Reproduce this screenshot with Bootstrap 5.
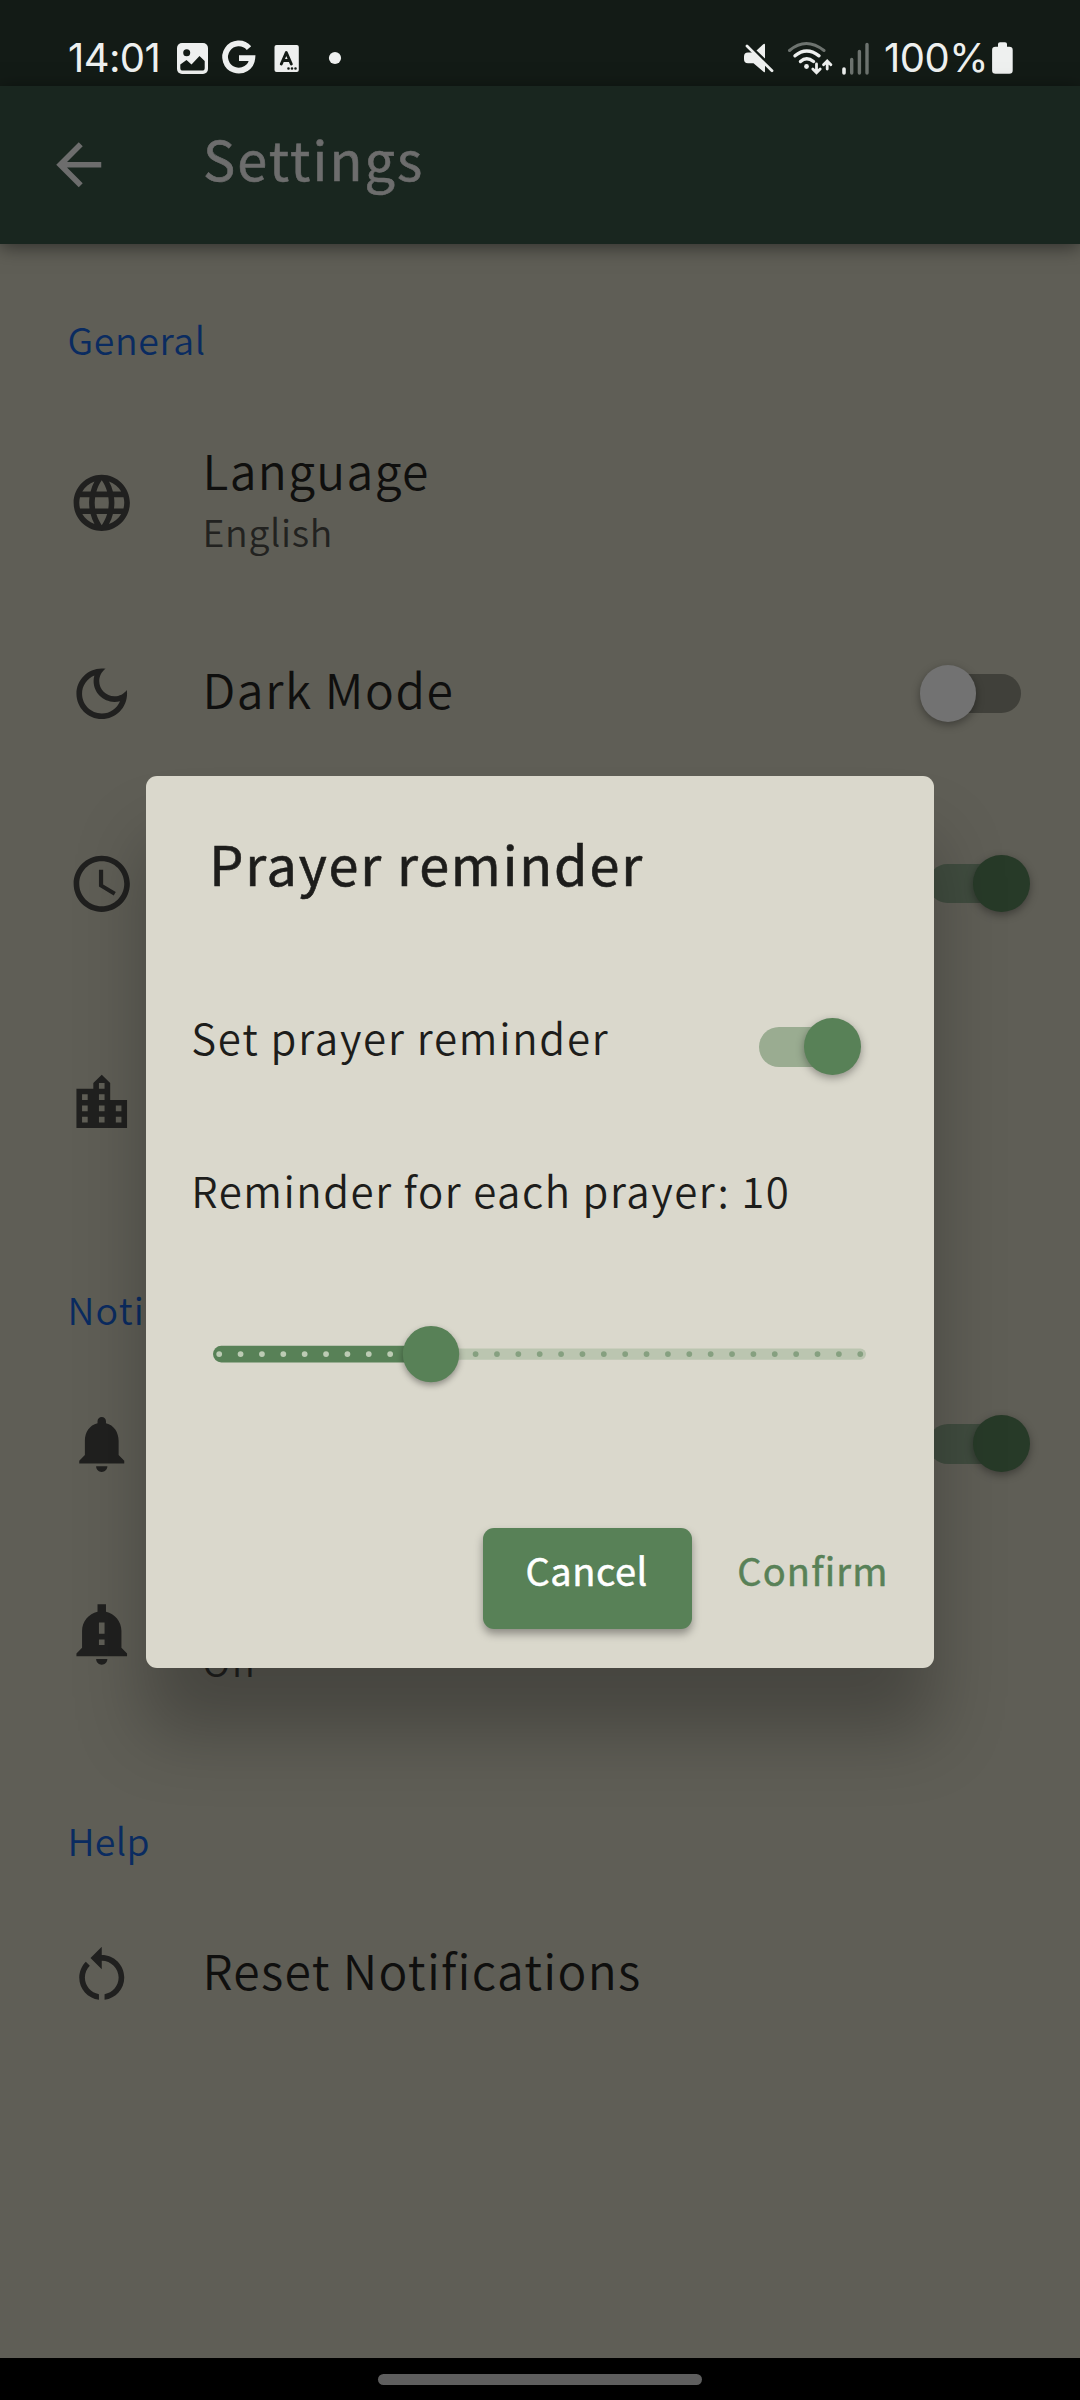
<!DOCTYPE html>
<html lang="en">
<head>
<meta charset="utf-8">
<meta name="viewport" content="width=device-width, initial-scale=1">
<title>Settings</title>
<link href="https://cdn.jsdelivr.net/npm/bootstrap@5.3.0/dist/css/bootstrap.min.css" rel="stylesheet">
<style>
  html, body { height: 2400px; overflow: hidden; }
  body { background: #5f5e56; font-family: "Noto Sans CJK SC", "Noto Sans", sans-serif; font-weight: 350; color: #0f0f0e; }
  .screen { width: 1080px; height: 2400px; overflow: hidden; }
  .statusbar { height: 86px; background: #131b16; color: #eef0ef; font: 400 40px/40px Inter, Roboto, sans-serif; padding: 0 66px 0 68px; }
  .status-group { padding-top: 30px; white-space: nowrap; }
  .clock-text { width: 92px; letter-spacing: -.6px; }
  .pct-text { width: 106px; letter-spacing: -.5px; }
  .appbar { height: 157.5px; background: #19261f; color: #6d6d6d; padding-left: 45px; box-shadow: 0 3px 18px rgba(0,0,0,.5); z-index: 1; }
  .appbar-title { font-size: 54px; line-height: 80px; font-weight: 400; margin-left: 90.5px; letter-spacing: 2.1px; padding-bottom: 14px; -webkit-text-stroke: .6px; }
  .glyph { width: 67.5px; height: 67.5px; flex: none; fill: #20201f; }
  .appbar .glyph { fill: #6d6d6d; }
  .sect { color: #0a2b60; font-size: 37.5px; line-height: 60px; padding-left: 67.5px; letter-spacing: .6px; }
  .setting { height: 190.2px; padding: 0 39px 0 67.5px; }
  .setting-tall { height: 249px; }
  .setting-text { margin-left: 67.5px; }
  .t1 { font-size: 48px; line-height: 62px; letter-spacing: 1.35px; }
  .t2 { font-size: 37.5px; line-height: 62px; color: #222220; letter-spacing: .65px; }
  .toggle { width: 121px; height: 67px; flex: none; position: relative; }
  .toggle::before { content: ""; position: absolute; left: 8px; top: 13.8px; width: 93px; height: 39.5px; border-radius: 20px; background: #40403a; }
  .toggle::after { content: ""; position: absolute; left: -.5px; top: 5.2px; width: 56.5px; height: 56.5px; border-radius: 50%; background: #727272; box-shadow: 0 3px 8px rgba(0,0,0,.35); }
  .toggle.on::before { background: #404c3f; }
  .toggle.on::after { left: 53px; background: #273a28; }
  .dlg .toggle.on::before { background: #9aac91; }
  .dlg .toggle.on::after { background: #588157; }
  .overlay { top: 86px; bottom: 42px; left: 0; right: 0; z-index: 2; }
  .dlg { width: 787.5px; height: 892.5px; border-radius: 11px; background: #dad8cc; color: #1d1d1b; box-shadow: 0 65px 70px rgba(0,0,0,.26); }
  .dlg-title { padding: 47px 0 0 63px; font-size: 54px; line-height: 80px; font-weight: 400; letter-spacing: 1.82px; -webkit-text-stroke: .6px; }
  .dlg-row { margin-top: 68px; height: 152px; padding: 0 61.5px 0 45px; font-size: 42px; }
  .dlg-rowtext { padding-bottom: 20px; letter-spacing: 1.76px; }
  .dlg-label { padding: 37px 0 0 45px; font-size: 42px; line-height: 60px; letter-spacing: 1.54px; }
  .range { margin: 104px 0 0 57px; width: 674px; height: 60px; overflow: visible; }
  .dlg-foot { padding: 0 42px 39px 0; }
  .dlg .btn { font-size: 38px; line-height: 60px; font-weight: 400; border: 0; height: 101.5px; -webkit-text-stroke: .5px; }
  .dlg .btn-fill, .dlg .btn-fill:hover { width: 209px; background: #588157; color: #fff; border-radius: 11px; box-shadow: 0 5px 9px rgba(0,0,0,.35); letter-spacing: .55px; padding: 12px 2px 29px 0; }
  .dlg .btn-flat { width: 154.5px; color: #588157; margin-left: 45px; letter-spacing: 1.15px; padding: 12px 0 29px; text-align: left; white-space: nowrap; }
  .navpill { height: 42px; background: #000; }
  .navpill span { width: 324px; height: 11px; border-radius: 6px; background: #5e5e5e; margin-top: 1px; }
</style>
</head>
<body>
<div class="screen d-flex flex-column position-relative">
  <div class="statusbar d-flex align-items-center justify-content-between flex-shrink-0">
    <div class="status-group d-flex align-items-center">
      <span class="clock-text">14:01</span>
      <svg width="190" height="40" viewBox="160 38 190 40" fill="#eef0ef">
        <rect x="177" y="43" width="31" height="31" rx="5"/>
        <circle cx="186.7" cy="52.7" r="3.5" fill="#131b16"/>
        <path d="M180.3 64.5L186.5 60L191.5 64.5L199.5 56L204.7 61V68Q204.7 70.6 202 70.6H183Q180.3 70.6 180.3 68Z" fill="#131b16"/>
        <path d="M249 48.1A13.6 13.6 0 1 0 252.3 58.2H239" fill="none" stroke="#eef0ef" stroke-width="5.8"/>
        <rect x="274.500" y="45" width="24.300" height="27" rx="2"/>
        <path d="M281.300 64L286.300 52.500L291.300 64M283 60.500H289.700" fill="none" stroke="#131b16" stroke-width="2.900" stroke-linejoin="round" stroke-linecap="round"/>
        <path d="M288.500 68.500h.01M292 68.500h.01M295.500 68.500h.01" stroke="#131b16" stroke-width="2.600" stroke-linecap="round"/>
        <circle cx="335" cy="58" r="6.100"/>
      </svg>
    </div>
    <div class="status-group d-flex align-items-center">
      <svg width="144" height="40" viewBox="740 38 144 40" fill="none" stroke="#eef0ef" stroke-linecap="round">
        <path d="M756.500 50.500L763 44.500Q765 43 765 45V58.500Z" fill="#eef0ef" stroke="none"/>
        <path d="M748 52.500h5L765 64.500V71.500Q765 73 763.500 71.800L753.500 63.300H748Q744 63.300 744 59.300V56.500Q744 52.500 748 52.500Z" fill="#eef0ef" stroke="none"/>
        <path d="M747 46L772 70.800" stroke-width="2.800"/>
        <path d="M789.500 50.500Q806 36.500 824 50.500" stroke="#6d736f" stroke-width="3"/>
        <path d="M795 55.800Q806.500 46 819 55.800M800.500 61.500Q806.500 56 813.500 61.500" stroke-width="3.400"/>
        <circle cx="806.500" cy="66.500" r="2.400" fill="#eef0ef" stroke="none"/>
        <path d="M816.500 64V72.500M812.800 69L816.500 72.800L820.200 69M827.200 69V61.500M823.500 64.800L827.200 61L830.900 64.800" stroke-width="2.800"/>
        <path d="M844 69V73" stroke-width="3.600"/>
        <path d="M851.700 59.500V73M859.400 51.500V73M867 44.500V73" stroke="#6d736f" stroke-width="3.400"/>
      </svg>
      <span class="pct-text">100%</span>
      <svg width="24" height="40" viewBox="990 38 24 40" fill="#eef0ef"><path d="M995.500 46.800h2.500V44q0-1.700 2-1.700h5q2 0 2 1.700v2.800h2.300q3.400 0 3.400 3.200V70.600q0 3.200-3.400 3.200H995.500q-3.400 0-3.400-3.200V50q0-3.200 3.400-3.200z"/></svg>
    </div>
  </div>

  <header class="appbar d-flex align-items-center flex-shrink-0 position-relative">
    <svg class="glyph" viewBox="0 0 24 24"><path d="M20 11H7.830l5.590-5.590L12 4l-8 8 8 8 1.410-1.410L7.830 13H20z"/></svg>
    <div class="appbar-title">Settings</div>
  </header>

  <main class="flex-grow-1">
    <div class="sect" style="padding-top:65px;padding-bottom:39.600px">General</div>
    <div class="setting d-flex align-items-center">
      <svg class="glyph" viewBox="0 0 24 24"><path d="M11.990 2C6.470 2 2 6.480 2 12s4.470 10 9.990 10C17.520 22 22 17.520 22 12S17.520 2 11.990 2zm6.930 6h-2.950c-.32-1.250-.78-2.450-1.380-3.560 1.840.63 3.370 1.910 4.330 3.560zM12 4.040c.83 1.200 1.480 2.530 1.910 3.960h-3.820c.43-1.430 1.080-2.760 1.910-3.960zM4.260 14C4.100 13.360 4 12.690 4 12s.1-1.360.26-2h3.380c-.08.66-.14 1.320-.14 2 0 .68.06 1.340.14 2H4.260zm.82 2h2.950c.32 1.250.78 2.450 1.380 3.560-1.840-.63-3.370-1.900-4.330-3.560zm2.950-8H5.080c.96-1.660 2.490-2.930 4.330-3.560C8.810 5.550 8.350 6.750 8.030 8zM12 19.960c-.83-1.200-1.480-2.530-1.910-3.960h3.820c-.43 1.430-1.080 2.760-1.910 3.960zM14.340 14H9.660c-.09-.66-.16-1.320-.16-2 0-.68.07-1.350.16-2h4.680c.09.65.16 1.320.16 2 0 .68-.07 1.340-.16 2zm.25 5.560c.6-1.110 1.060-2.310 1.380-3.560h2.950c-.96 1.650-2.490 2.930-4.330 3.560zM16.360 14c.08-.66.14-1.320.14-2 0-.68-.06-1.340-.14-2h3.380c.16.64.26 1.310.26 2s-.1 1.360-.26 2h-3.380z"/></svg>
      <div class="setting-text" style="padding-bottom:6px"><div class="t1">Language</div><div class="t2">English</div></div>
    </div>
    <div class="setting d-flex align-items-center">
      <svg class="glyph" viewBox="0 0 24 24"><path d="M9.370 5.510C9.190 6.150 9.100 6.820 9.100 7.500c0 4.080 3.320 7.400 7.400 7.400.68 0 1.350-.09 1.990-.27C17.450 17.190 14.930 19 12 19c-3.860 0-7-3.140-7-7 0-2.930 1.810-5.450 4.370-6.490zM12 3c-4.970 0-9 4.030-9 9s4.030 9 9 9 9-4.030 9-9c0-.46-.04-.92-.1-1.360-.98 1.370-2.580 2.260-4.400 2.260-2.980 0-5.400-2.420-5.400-5.400 0-1.810.89-3.420 2.260-4.400-.44-.06-.9-.1-1.360-.1z"/></svg>
      <div class="setting-text" style="padding-bottom:11px"><div class="t1" style="letter-spacing:1.560px">Dark Mode</div></div>
      <div class="toggle ms-auto"></div>
    </div>
    <div class="setting d-flex align-items-center">
      <svg class="glyph" viewBox="0 0 24 24"><path d="M11.990 2C6.470 2 2 6.480 2 12s4.470 10 9.990 10C17.520 22 22 17.520 22 12S17.520 2 11.990 2zM12 20c-4.420 0-8-3.580-8-8s3.580-8 8-8 8 3.580 8 8-3.580 8-8 8zm.5-13H11v6l5.250 3.150.75-1.230-4.500-2.670z"/></svg>
      <div class="toggle on ms-auto"></div>
    </div>
    <div class="setting setting-tall d-flex align-items-center">
      <svg class="glyph" viewBox="0 0 24 24"><path d="M15 11V5l-3-3-3 3v2H3v14h18V11h-6zm-8 8H5v-2h2v2zm0-4H5v-2h2v2zm0-4H5V9h2v2zm6 8h-2v-2h2v2zm0-4h-2v-2h2v2zm0-4h-2V9h2v2zm0-4h-2V5h2v2zm6 12h-2v-2h2v2zm0-4h-2v-2h2v2z"/></svg>
    </div>
    <div class="sect" style="padding-top:51px;padding-bottom:10px;letter-spacing:1.200px">Notifications</div>
    <div class="setting d-flex align-items-center">
      <svg class="glyph" viewBox="0 0 24 24"><path d="M12 22c1.100 0 2-.9 2-2h-4c0 1.100.89 2 2 2zm6-6v-5c0-3.070-1.640-5.640-4.500-6.320V4c0-.83-.67-1.500-1.500-1.500s-1.500.67-1.500 1.500v.68C7.630 5.360 6 7.920 6 11v5l-2 2v1h16v-1l-2-2z"/></svg>
      <div class="toggle on ms-auto"></div>
    </div>
    <div class="setting d-flex align-items-center">
      <svg class="glyph" viewBox="0 0 24 24"><path d="M12 23c1.100 0 1.990-.89 1.990-1.990h-3.980c0 1.100.89 1.990 1.990 1.990zm7-6v-6c0-3.350-2.360-6.150-5.500-6.830V1.500h-3v2.670C7.360 4.850 5 7.650 5 11v6l-2 2v1h18v-1l-2-2zm-6-1h-2v-2h2v2zm0-4h-2V8h2v4z"/></svg>
      <div class="setting-text" style="padding-top:55px"><div class="t2" style="letter-spacing:1.800px">On</div></div>
    </div>
    <div class="sect" style="padding-top:81px;padding-bottom:10px;letter-spacing:.3px">Help</div>
    <div class="setting d-flex align-items-center">
      <svg class="glyph" viewBox="0 0 24 24"><path d="M12 5V2L8 6l4 4V7c3.310 0 6 2.690 6 6 0 2.970-2.170 5.430-5 5.910v2.020c3.950-.49 7-3.850 7-7.930 0-4.420-3.580-8-8-8zm-6 8c0-1.650.67-3.150 1.760-4.240L6.340 7.340C4.900 8.790 4 10.790 4 13c0 4.080 3.050 7.440 7 7.930v-2.020c-2.830-.48-5-2.940-5-5.910z"/></svg>
      <div class="setting-text" style="padding-bottom:13px"><div class="t1" style="letter-spacing:1.300px">Reset Notifications</div></div>
    </div>
  </main>

  <div class="navpill d-flex align-items-center justify-content-center flex-shrink-0"><span></span></div>

  <div class="overlay position-absolute d-flex align-items-center justify-content-center">
    <section class="dlg d-flex flex-column" role="dialog">
      <div class="dlg-title">Prayer reminder</div>
      <div class="dlg-row d-flex align-items-center justify-content-between">
        <span class="dlg-rowtext">Set prayer reminder</span>
        <div class="toggle on"></div>
      </div>
      <div class="dlg-label">Reminder for each prayer: 10</div>
      <svg class="range" viewBox="203 1323.300 674 60">
        <rect x="400" y="1347.800" width="466" height="11.200" rx="5.600" fill="#bbc5b0"/>
        <rect x="213" y="1345" width="218" height="16.800" rx="8.400" fill="#588157"/>
        <path d="M219.200 1353.400H391" stroke="#bccbb4" stroke-width="5.800" stroke-linecap="round" stroke-dasharray="0 21.370"/>
        <path d="M475.600 1353.400H861" stroke="#86a080" stroke-width="5.800" stroke-linecap="round" stroke-dasharray="0 21.370"/>
        <circle cx="431" cy="1353.400" r="28.200" fill="#588157" style="filter:drop-shadow(0 3px 3px rgba(0,0,0,.35))"/>
      </svg>
      <div class="dlg-foot d-flex justify-content-end mt-auto">
        <button type="button" class="btn btn-fill">Cancel</button>
        <button type="button" class="btn btn-flat">Confirm</button>
      </div>
    </section>
  </div>
</div>
<script src="https://cdn.jsdelivr.net/npm/bootstrap@5.3.0/dist/js/bootstrap.bundle.min.js"></script>
</body>
</html>
